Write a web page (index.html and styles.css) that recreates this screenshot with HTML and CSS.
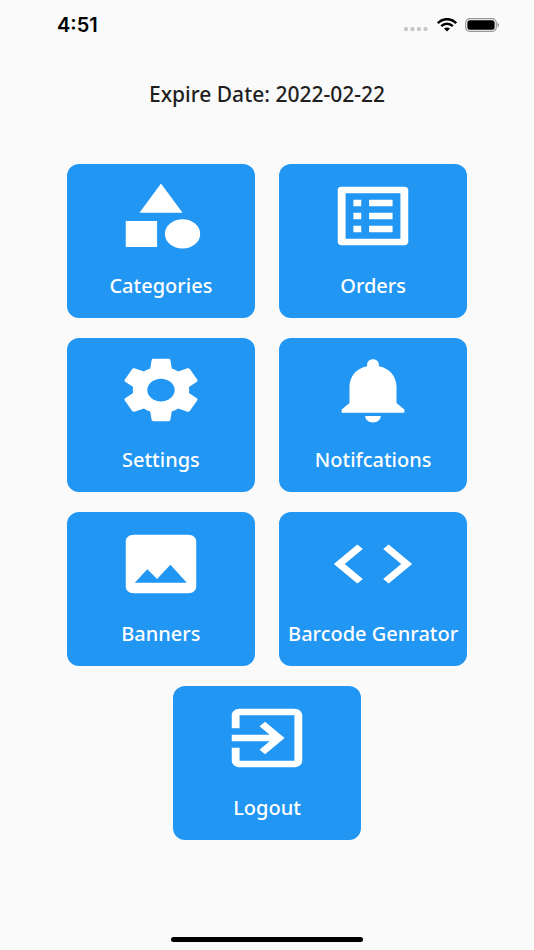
FILE: index.html
```html
<!DOCTYPE html>
<html lang="en">
<head>
    <meta charset="UTF-8">
    <meta name="viewport" content="width=device-width, initial-scale=1.0">
    <title>Dashboard</title>
    <link rel="stylesheet" href="styles.css">
</head>
<body>
    <header class="status-bar">
        <span class="time">4:51</span>
        <div class="status-icons">
            <svg class="signal" width="26" height="14" viewBox="0 0 26 14" fill="#c7c7c9" aria-hidden="true">
                <rect x="1" y="9" width="4" height="4" rx="1.5"/>
                <rect x="7.5" y="9" width="4" height="4" rx="1.5"/>
                <rect x="14" y="9" width="4" height="4" rx="1.5"/>
                <rect x="20.5" y="9" width="4" height="4" rx="1.5"/>
            </svg>
            <svg class="wifi" width="20" height="14" viewBox="0 0 20 14" fill="none" stroke="#000" stroke-width="2.5" aria-hidden="true">
                <path d="M.8 5.2C6-.2 14-.2 19.2 5.2"/>
                <path d="M4.2 8.2c3.4-3.2 8.2-3.2 11.600 0"/>
                <path d="M7 10.600c1.800-1.500 4.200-1.500 6 0L10 13.400z" fill="#000" stroke="none"/>
            </svg>
            <svg class="battery" width="35" height="14" viewBox="0 0 35 14" aria-hidden="true">
                <rect x=".7" y=".7" width="30.6" height="12.6" rx="4" fill="none" stroke="#99979a" stroke-width="1.2"/>
                <rect x="2.4" y="2.2" width="27.2" height="9.6" rx="2.5" fill="#000"/>
                <path d="M32.5 4.8c2 .8 2 3.6 0 4.4z" fill="#8a8a8c"/>
            </svg>
        </div>
    </header>

    <main class="dashboard">
        <h1 class="expire">Expire Date: 2022-02-22</h1>

        <div class="menu">
            <button class="card" type="button">
                <svg class="icon" viewBox="0 0 24 24" preserveAspectRatio="none" aria-hidden="true">
                    <path d="M12 2l-5.5 9h11z"/>
                    <circle cx="17.5" cy="17.5" r="4.5"/>
                    <path d="M3 13.5h8v8H3z"/>
                </svg>
                <span>Categories</span>
            </button>
            <button class="card" type="button">
                <svg class="icon" viewBox="0 0 24 24" preserveAspectRatio="none" aria-hidden="true">
                    <path d="M19 5v14H5V5h14m1.1-2H3.9c-.5 0-.9.4-.9.9v16.2c0 .4.4.9.9.9h16.2c.4 0 .9-.5.9-.9V3.9c0-.5-.5-.9-.9-.9zM11 7h6v2h-6V7zm0 4h6v2h-6v-2zm0 4h6v2h-6zM7 7h2v2H7zm0 4h2v2H7zm0 4h2v2H7z"/>
                </svg>
                <span>Orders</span>
            </button>
            <button class="card" type="button">
                <svg class="icon" viewBox="0 0 24 24" preserveAspectRatio="none" aria-hidden="true">
                    <path d="M19.14 12.94c.04-.3.06-.61.06-.94 0-.32-.02-.64-.07-.94l2.03-1.58c.18-.14.23-.41.12-.61l-1.92-3.32c-.12-.22-.37-.29-.59-.22l-2.39.96c-.5-.38-1.03-.7-1.62-.94l-.36-2.54c-.04-.24-.24-.41-.48-.41h-3.84c-.24 0-.43.17-.47.41l-.36 2.54c-.59.24-1.13.57-1.62.94l-2.39-.96c-.22-.08-.47 0-.59.22L2.74 8.87c-.12.21-.08.47.12.61l2.03 1.58c-.05.3-.09.63-.09.94s.02.64.07.94l-2.03 1.58c-.18.14-.23.41-.12.61l1.92 3.32c.12.22.37.29.59.22l2.39-.96c.5.38 1.03.7 1.62.94l.36 2.54c.05.24.24.41.48.41h3.84c.24 0 .44-.17.47-.41l.36-2.54c.59-.24 1.13-.56 1.62-.94l2.39.96c.22.08.47 0 .59-.22l1.92-3.32c.12-.22.07-.47-.12-.61l-2.01-1.58zM12 15.5c-1.93 0-3.5-1.57-3.5-3.5s1.57-3.5 3.5-3.5 3.5 1.57 3.5 3.5-1.57 3.5-3.5 3.5z"/>
                </svg>
                <span>Settings</span>
            </button>
            <button class="card" type="button">
                <svg class="icon" viewBox="0 0 24 24" preserveAspectRatio="none" aria-hidden="true">
                    <path d="M12 22c1.1 0 2-.9 2-2h-4c0 1.1.9 2 2 2zM18 16v-5c0-3.07-1.63-5.64-4.5-6.32V4c0-.83-.67-1.5-1.5-1.5s-1.5.67-1.5 1.5v.68C7.64 5.36 6 7.92 6 11v5l-2 2v1h16v-1l-2-2z"/>
                </svg>
                <span>Notifcations</span>
            </button>
            <button class="card" type="button">
                <svg class="icon" viewBox="0 0 24 24" preserveAspectRatio="none" aria-hidden="true">
                    <path d="M19 3H5c-1.1 0-2 .9-2 2v14c0 1.1.9 2 2 2h14c1.1 0 2-.9 2-2V5c0-1.1-.9-2-2-2zM5.300 17.800l3.200-4.200 2.500 3 3.400-4.400 4.200 5.600z"/>
                </svg>
                <span>Banners</span>
            </button>
            <button class="card" type="button">
                <svg class="icon" viewBox="0 0 24 24" preserveAspectRatio="none" aria-hidden="true">
                    <path d="M9.4 16.6L4.8 12l4.6-4.6L8 6l-6 6 6 6 1.4-1.4zm5.2 0l4.6-4.6-4.6-4.6L16 6l6 6-6 6-1.4-1.4z"/>
                </svg>
                <span>Barcode Genrator</span>
            </button>
            <button class="card" type="button">
                <svg class="icon" viewBox="0 0 24 24" preserveAspectRatio="none" aria-hidden="true">
                    <path d="M10.09 15.59L11.5 17l5-5-5-5-1.41 1.41L12.67 11H3v2h9.67l-2.58 2.59zM19 3H5c-1.11 0-2 .9-2 2v4h2V5h14v14H5v-4H3v4c0 1.1.89 2 2 2h14c1.1 0 2-.9 2-2V5c0-1.1-.9-2-2-2z"/>
                </svg>
                <span>Logout</span>
            </button>
        </div>
    </main>

    <footer class="home">
        <div class="home-indicator"></div>
    </footer>
</body>
</html>
```
FILE: styles.css
```css
* {
    box-sizing: border-box;
}
body {
    font-family: "Noto Sans", "Open Sans", sans-serif;
    background-color: #fafafa;
    color: #1f1f1f;
    display: flex;
    flex-direction: column;
    min-height: 100vh;
    margin: 0;
}
.status-bar {
    display: flex;
    align-items: center;
    justify-content: space-between;
    height: 50px;
    padding: 0 34px 0 57px;
}
.time {
    font-family: Inter, sans-serif;
    font-size: 20px;
    font-weight: 600;
    color: #000;
}
.status-icons {
    display: flex;
    align-items: center;
    gap: 8px;
}
.dashboard {
    flex: 1;
    padding: 30px 12.5% 0;
}
.expire {
    margin: 0 0 56px;
    font-size: 21px;
    line-height: 28px;
    font-weight: 500;
    text-align: center;
}
.menu {
    display: flex;
    flex-wrap: wrap;
    justify-content: center;
    gap: 20px 24px;
}
.card {
    display: flex;
    flex-direction: column;
    align-items: center;
    justify-content: space-between;
    width: calc(50% - 12px);
    height: 154px;
    padding: 13px 0 18px;
    border: none;
    border-radius: 12px;
    background-color: #2196f3;
    color: #fff;
    font-family: inherit;
    font-size: 20px;
    line-height: 28px;
    font-weight: 500;
    white-space: nowrap;
    cursor: pointer;
}
.card:hover {
    background-color: #1e88e5;
}
.icon {
    width: 94px;
    height: 78px;
    fill: currentColor;
}
.home {
    display: flex;
    justify-content: center;
    padding-bottom: 8px;
}
.home-indicator {
    width: 36%;
    height: 5px;
    border-radius: 3px;
    background-color: #000;
}
```
